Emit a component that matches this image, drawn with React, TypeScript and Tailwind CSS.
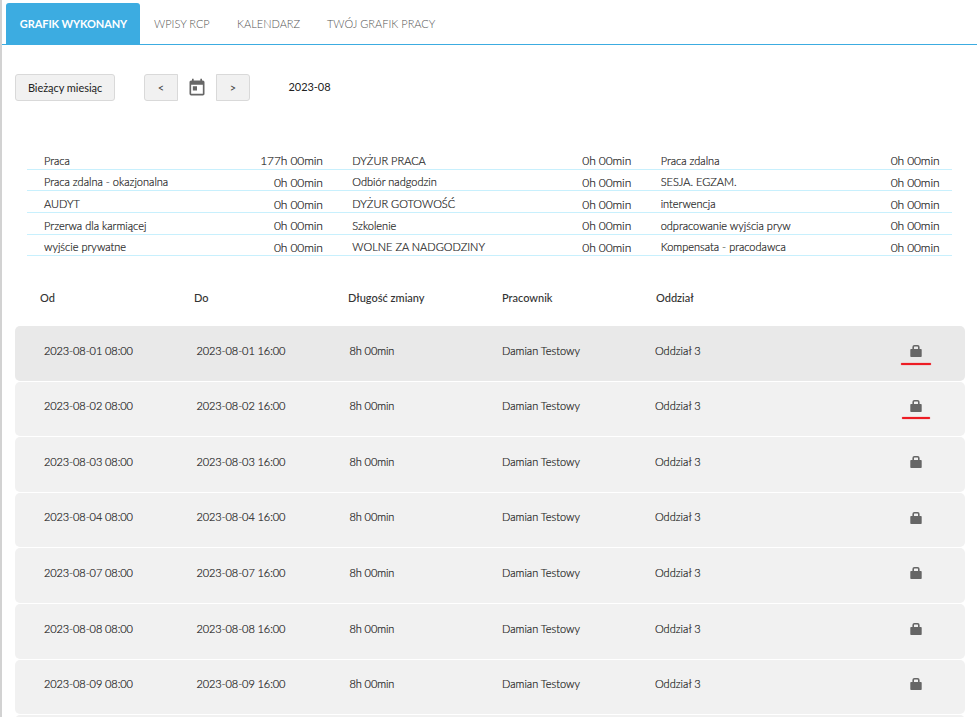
import React from "react";
import { MdToday } from "react-icons/md";

const summary = [
  { h: "h-[22px]", lead: "pt-[6px]", valueLead: "pt-[6px]", cells: [["Praca", "177h 00min"], ["DYŻUR PRACA", "0h 00min"], ["Praca zdalna", "0h 00min"]] },
  { h: "h-[21px]", lead: "pt-[5px]", valueLead: "pt-[6px]", cells: [["Praca zdalna - okazjonalna", "0h 00min"], ["Odbiór nadgodzin", "0h 00min"], ["SESJA. EGZAM.", "0h 00min"]] },
  { h: "h-[22px]", lead: "pt-[6px]", valueLead: "pt-[7px]", cells: [["AUDYT", "0h 00min"], ["DYŻUR GOTOWOŚĆ", "0h 00min"], ["interwencja", "0h 00min"]] },
  { h: "h-[22px]", lead: "pt-[6px]", valueLead: "pt-[6px]", cells: [["Przerwa dla karmiącej", "0h 00min"], ["Szkolenie", "0h 00min"], ["odpracowanie wyjścia pryw", "0h 00min"]] },
  { h: "h-[21px]", lead: "pt-[5px]", valueLead: "pt-[6px]", cells: [["wyjście prywatne", "0h 00min"], ["WOLNE ZA NADGODZINY", "0h 00min"], ["Kompensata - pracodawca", "0h 00min"]] },
];

const shifts = [
  { day: "2023-08-01", box: "h-[55px] bg-[#e9e9e9] pt-[18px]", lock: "mt-px", mark: "left-[-9px] top-[18px] w-[30px]" },
  { day: "2023-08-02", box: "h-[54px] bg-[#f1f1f1] pt-[17px]", lock: "mt-px", mark: "left-[-8px] top-[17px] w-[28px]" },
  { day: "2023-08-03", box: "h-[55px] bg-[#f1f1f1] pt-[18px]", lock: "mt-px" },
  { day: "2023-08-04", box: "h-[54px] bg-[#f1f1f1] pt-[17px]", lock: "mt-[2px]" },
  { day: "2023-08-07", box: "h-[55px] bg-[#f1f1f1] pt-[18px]", lock: "mt-px" },
  { day: "2023-08-08", box: "h-[55px] bg-[#f1f1f1] pt-[18px]", lock: "mt-px" },
  { day: "2023-08-09", box: "h-[54px] bg-[#f1f1f1] pt-[17px]", lock: "mt-px" },
];

function Lock() {
  return (
    <svg width="12" height="12" viewBox="0 0 12 12" className="block">
      <path d="M3.2 5V2Q3.2 .8 4.4 .8H7.6Q8.8 .8 8.8 2V5" fill="none" stroke="#666" strokeWidth="1.6" />
      <rect x="0.3" y="4" width="11.4" height="8" rx="0.8" fill="#666" />
    </svg>
  );
}

export default function App() {
  return (
    <div className="h-[717px] w-[977px] overflow-hidden border-l-2 border-[#d2d2d2] bg-white font-['Lato',sans-serif] text-[11px] font-light leading-[14px] text-[#222]">
      <nav className="flex h-[45px] items-end border-b border-[#3cace1] pl-1 text-[#555]">
        <a className="flex h-[41px] w-[134px] items-center justify-center rounded-t-[3px] bg-[#3cace1] pl-px font-bold tracking-[-0.1px] text-white">GRAFIK WYKONANY</a>
        <a className="flex h-[41px] w-[83px] items-center pl-[14px]">WPISY RCP</a>
        <a className="flex h-[41px] w-[90px] items-center pl-[14px]">KALENDARZ</a>
        <a className="flex h-[41px] items-center pl-[14px]">TWÓJ GRAFIK PRACY</a>
      </nav>

      <div className="mt-[29px] flex h-[27px] items-center pl-[13px] font-normal text-[#222]">
        <button className="h-[27px] w-[100px] rounded-[3px] border border-[#d9d9d9] bg-[#f1f1f1] tracking-[-0.05px]">Bieżący miesiąc</button>
        <button className="ml-[29px] h-[27px] w-[34px] rounded-l-[3px] border border-[#d9d9d9] bg-[#f1f1f1] text-[#444]">&lt;</button>
        <MdToday className="mx-[9px] h-5 w-5 text-[#666]" />
        <button className="h-[27px] w-[34px] rounded-r-[3px] border border-[#d9d9d9] bg-[#f1f1f1] text-[#444]">&gt;</button>
        <span className="ml-[38.5px] pb-px tracking-[-0.05px]">2023-08</span>
      </div>

      <section className="ml-[25px] mt-[47px] w-[925px] [-webkit-text-stroke:0.2px]">
        {summary.map((row) => (
          <div key={row.cells[0][0]} className={`grid grid-cols-3 border-b border-[#c8f0fd] ${row.h}`}>
            {row.cells.map(([label, value]) => (
              <div key={label} className="flex justify-between pl-[17px] pr-[12.5px]">
                <span className={row.lead}>{label}</span>
                <span className={`text-[12px] tracking-[-0.1px] ${row.valueLead}`}>{value}</span>
              </div>
            ))}
          </div>
        ))}
      </section>

      <div className="mt-[35px] flex pl-[38px] font-medium text-[#333]">
        <span className="w-[154px]">Od</span>
        <span className="w-[154px]">Do</span>
        <span className="w-[154px]">Długość zmiany</span>
        <span className="w-[154px]">Pracownik</span>
        <span>Oddział</span>
      </div>

      <div className="ml-[13px] mt-[21px] flex w-[950px] flex-col gap-px [-webkit-text-stroke:0.2px]">
        {shifts.map((s) => (
          <div key={s.day} className={`flex shrink-0 items-start rounded-[5px] pl-[29px] ${s.box}`}>
            <span className="w-[152.5px] tracking-[-0.1px]">{s.day} 08:00</span>
            <span className="w-[153px] tracking-[-0.1px]">{s.day} 16:00</span>
            <span className="w-[152.5px] tracking-[-0.1px]">8h 00min</span>
            <span className="w-[153px]">Damian Testowy</span>
            <span className="w-[255px]">Oddział 3</span>
            <div className={`relative ${s.lock}`}>
              <Lock />
              {s.mark && <span className={`absolute h-[2px] rounded-full bg-[#ed1c24] shadow-[0_0_1px_#ed1c24] ${s.mark}`} />}
            </div>
          </div>
        ))}
        <div className="h-[55px] shrink-0 rounded-[5px] bg-[#f1f1f1]" />
      </div>
    </div>
  );
}
